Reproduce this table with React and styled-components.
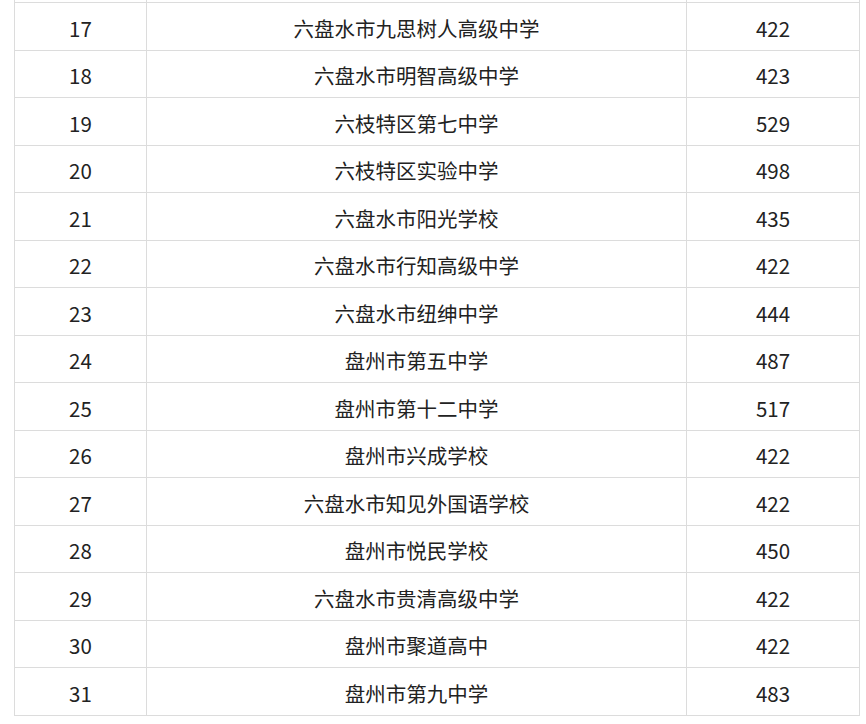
import React from 'react'
import styled, {createGlobalStyle} from 'styled-components'

const Global = createGlobalStyle`
  html, body {
    margin: 0;
    padding: 0;
    background: #fff;
  }
`

const rows = [
  [17, '六盘水市九思树人高级中学', 422],
  [18, '六盘水市明智高级中学', 423],
  [19, '六枝特区第七中学', 529],
  [20, '六枝特区实验中学', 498],
  [21, '六盘水市阳光学校', 435],
  [22, '六盘水市行知高级中学', 422],
  [23, '六盘水市纽绅中学', 444],
  [24, '盘州市第五中学', 487],
  [25, '盘州市第十二中学', 517],
  [26, '盘州市兴成学校', 422],
  [27, '六盘水市知见外国语学校', 422],
  [28, '盘州市悦民学校', 450],
  [29, '六盘水市贵清高级中学', 422],
  [30, '盘州市聚道高中', 422],
  [31, '盘州市第九中学', 483],
]

const Page = styled.div`
  width: 866px;
  height: 724px;
  overflow: hidden;
  padding-left: 14px;
  box-sizing: border-box;
`

const Table = styled.table`
  border-collapse: collapse;
  table-layout: fixed;
  width: 845px;
  font-family: "Noto Sans CJK SC", "Noto Sans", sans-serif;
  font-size: 20.5px;
  color: #222;
`

const Cell = styled.td`
  border: 1px solid #dcdcdc;
  text-align: center;
  padding: 3px 0 0;
  height: 43.5px;
  line-height: 1;
`

const CutRow = styled.tr`
  td {
    border-top: none;
    height: 2px;
    padding: 0;
  }
`

export default function App() {
  return (
    <Page>
      <Global />
      <Table>
        <colgroup>
          <col style={{width: 132}} />
          <col style={{width: 540}} />
          <col style={{width: 173}} />
        </colgroup>
        <tbody>
          <CutRow>
            <Cell></Cell>
            <Cell></Cell>
            <Cell></Cell>
          </CutRow>
          {rows.map(([n, name, score]) => (
            <tr key={n}>
              <Cell>{n}</Cell>
              <Cell>{name}</Cell>
              <Cell>{score}</Cell>
            </tr>
          ))}
        </tbody>
      </Table>
    </Page>
  )
}
